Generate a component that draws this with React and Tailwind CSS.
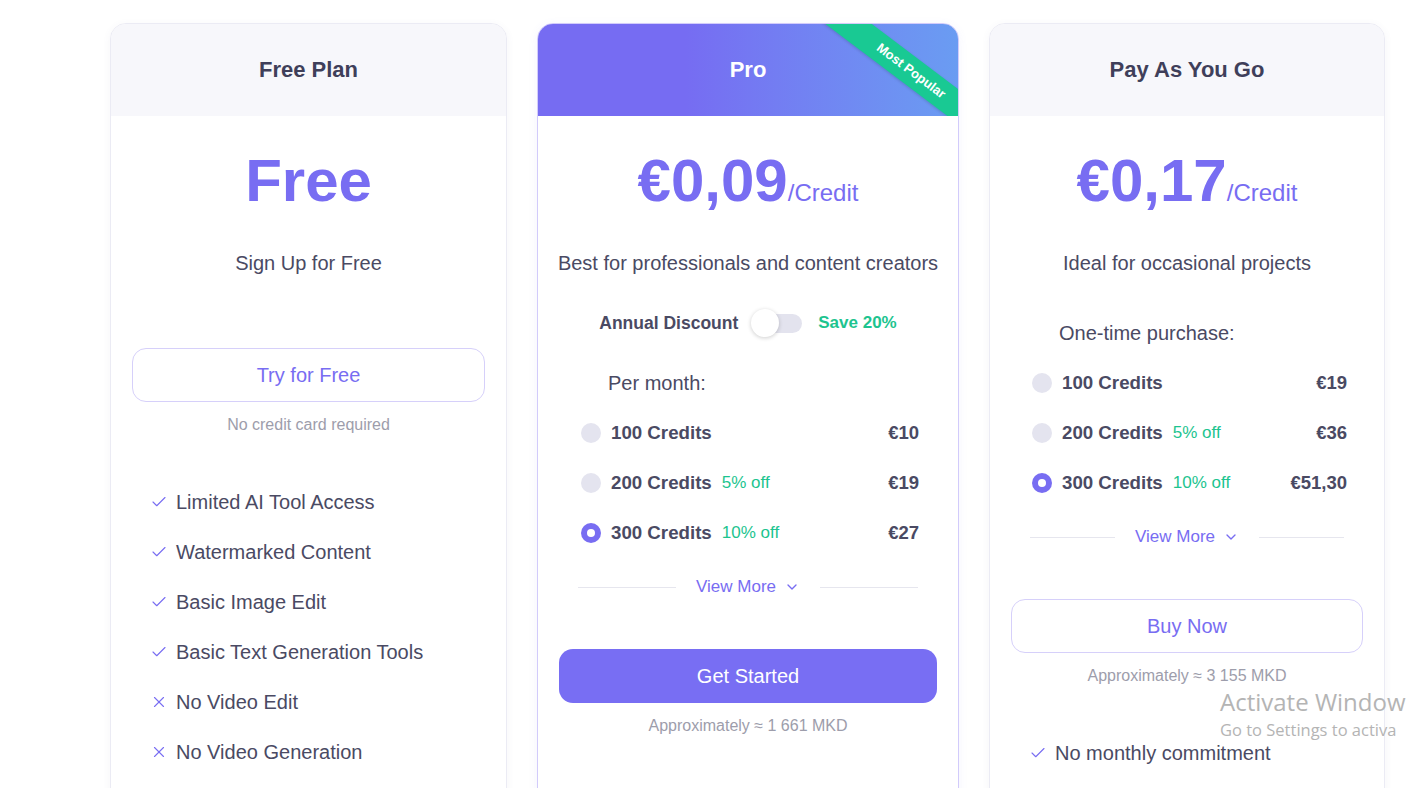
import { ChevronDown, Check, X } from 'lucide-react'

const textDark = 'text-[#4a4a63]'

const Radio = ({ checked }) =>
  checked ? (
    <span className="w-[20px] h-[20px] rounded-full bg-[#786df2] flex items-center justify-center shrink-0">
      <span className="w-[8px] h-[8px] rounded-full bg-white" />
    </span>
  ) : (
    <span className="w-[20px] h-[20px] rounded-full bg-[#e4e4ef] shrink-0" />
  )

const Option = ({ credits, off, price, checked }) => (
  <div className="h-[50px] flex items-center">
    <Radio checked={checked} />
    <span className={`ml-[10px] text-[18.7px] font-bold ${textDark}`}>{credits}</span>
    {off && <span className="ml-[10px] text-[17px] text-[#1dc48f]">{off}</span>}
    <span className={`ml-auto text-[18.5px] font-bold ${textDark}`}>{price}</span>
  </div>
)

const ViewMore = () => (
  <div className="flex items-center h-[24px] px-[19px]">
    <div className="flex-1 h-px bg-[#e6e6ee]" />
    <div className="mx-[20px] flex items-center gap-[8px] text-[17px] text-[#786df2]">
      View More
      <ChevronDown size={16} strokeWidth={2} />
    </div>
    <div className="flex-1 h-px bg-[#e6e6ee]" />
  </div>
)

const Feature = ({ label, ok = true }) => (
  <li className="h-[50px] flex items-center pl-[18px]">
    {ok ? (
      <Check size={18} strokeWidth={1.5} className="text-[#786df2] shrink-0" />
    ) : (
      <X size={18} strokeWidth={1.5} className="text-[#786df2] shrink-0" />
    )}
    <span className={`ml-[8px] text-[20px] ${textDark}`}>{label}</span>
  </li>
)

const Price = ({ value, unit }) => (
  <div className="mt-[35px] h-[60px] flex items-end justify-center leading-none">
    <span className="text-[60px] font-bold text-[#786df2] leading-none">{value}</span>
    {unit && <span className="text-[24px] text-[#786df2] mb-[6px]">{unit}</span>}
  </div>
)

const Desc = ({ children }) => (
  <p className={`mt-[38px] -mx-[4px] whitespace-nowrap text-center text-[20px] leading-[28px] ${textDark}`}>{children}</p>
)

const Approx = ({ children }) => (
  <p className="mt-[11px] text-center text-[16px] leading-[24px] text-[#9d9dab]">{children}</p>
)

export default function App() {
  return (
    <div
      className="relative h-[788px] w-[1406px] overflow-hidden bg-white"
      style={{ fontFamily: '"Liberation Sans", Arial, sans-serif' }}
    >
      <div className="flex gap-[30px] pl-[110px] pt-[23px]">
        {/* Free plan */}
        <div className="w-[397px] h-[820px] shrink-0 rounded-2xl border border-[#ebebf4] bg-white shadow-[0_2px_8px_rgba(80,80,140,0.06)] overflow-hidden">
          <div className="h-[92px] bg-[#f7f7fb] flex items-center justify-center">
            <h2 className="text-[22px] font-bold text-[#3f3f5a] -mt-[2px]">Free Plan</h2>
          </div>
          <div className="px-[21px]">
            <Price value="Free" />
            <Desc>Sign Up for Free</Desc>
            <button className="mt-[71px] w-full h-[54px] rounded-[14px] border border-[#d6d0fa] bg-white text-[20px] text-[#786df2]">
              Try for Free
            </button>
            <Approx>No credit card required</Approx>
            <ul className="mt-[40px]">
              <Feature label="Limited AI Tool Access" />
              <Feature label="Watermarked Content" />
              <Feature label="Basic Image Edit" />
              <Feature label="Basic Text Generation Tools" />
              <Feature label="No Video Edit" ok={false} />
              <Feature label="No Video Generation" ok={false} />
            </ul>
          </div>
        </div>

        {/* Pro */}
        <div className="w-[422px] h-[820px] shrink-0 rounded-2xl border border-[#d2cbfb] bg-white shadow-[0_2px_10px_rgba(120,109,242,0.08)] overflow-hidden">
          <div className="relative h-[92px] bg-gradient-to-r from-[#766cf2] from-35% to-[#6a9cf2] flex items-center justify-center overflow-hidden">
            <h2 className="text-[22px] font-bold text-white -mt-[2px]">Pro</h2>
            <div className="absolute left-[268px] top-[33px] w-[210px] h-[28px] rotate-[37deg] bg-[#19c993] shadow-[0_1px_3px_rgba(0,0,0,0.15)] flex items-center justify-center text-[13px] font-bold text-white">
              Most Popular
            </div>
          </div>
          <div className="px-[21px]">
            <Price value="€0,09" unit="/Credit" />
            <Desc>Best for professionals and content creators</Desc>
            <div className="mt-[32px] h-[28px] flex items-center justify-center">
              <span className={`text-[17.5px] font-bold ${textDark}`}>Annual Discount</span>
              <span className="relative ml-[14px] w-[50px] h-[19px] rounded-full bg-[#e3e3ee]">
                <span className="absolute -left-[1px] -top-[5px] w-[28px] h-[28px] rounded-full bg-white shadow-[0_1px_4px_rgba(0,0,0,0.2)]" />
              </span>
              <span className="ml-[16px] text-[17px] font-bold text-[#1dc48f]">Save 20%</span>
            </div>
            <p className={`mt-[32px] pl-[49px] text-[20px] leading-[28px] ${textDark}`}>Per month:</p>
            <div className="mt-[11px] pl-[22px] pr-[18px]">
              <Option credits="100 Credits" price="€10" />
              <Option credits="200 Credits" off="5% off" price="€19" />
              <Option credits="300 Credits" off="10% off" price="€27" checked />
            </div>
            <div className="mt-[17px]">
              <ViewMore />
            </div>
            <button className="mt-[50px] w-full h-[54px] rounded-[14px] bg-[#786ef3] text-[20px] text-white">
              Get Started
            </button>
            <Approx>Approximately ≈ 1 661 MKD</Approx>
          </div>
        </div>

        {/* Pay as you go */}
        <div className="w-[396px] h-[820px] shrink-0 rounded-2xl border border-[#ebebf4] bg-white shadow-[0_2px_8px_rgba(80,80,140,0.06)] overflow-hidden">
          <div className="h-[92px] bg-[#f7f7fb] flex items-center justify-center">
            <h2 className="text-[22px] font-bold text-[#3f3f5a] -mt-[2px]">Pay As You Go</h2>
          </div>
          <div className="px-[21px]">
            <Price value="€0,17" unit="/Credit" />
            <Desc>Ideal for occasional projects</Desc>
            <p className={`mt-[42px] pl-[48px] text-[20px] leading-[28px] ${textDark}`}>One-time purchase:</p>
            <div className="mt-[11px] pl-[21px] pr-[16px]">
              <Option credits="100 Credits" price="€19" />
              <Option credits="200 Credits" off="5% off" price="€36" />
              <Option credits="300 Credits" off="10% off" price="€51,30" checked />
            </div>
            <div className="mt-[17px]">
              <ViewMore />
            </div>
            <button className="mt-[50px] w-full h-[54px] rounded-[14px] border border-[#d6d0fa] bg-white text-[20px] text-[#786df2]">
              Buy Now
            </button>
            <Approx>Approximately ≈ 3 155 MKD</Approx>
            <ul className="mt-[40px]">
              <Feature label="No monthly commitment" />
            </ul>
          </div>
        </div>
      </div>

      {/* OS watermark */}
      <div
        className="absolute left-[1220px] top-[686px] whitespace-nowrap text-[#b4b4b4] pointer-events-none"
        style={{ fontFamily: '"Open Sans", "Noto Sans", sans-serif' }}
      >
        <div className="text-[24px] leading-[31px]">Activate Window</div>
        <div className="text-[16.5px] leading-[26px]">Go to Settings to activa</div>
      </div>
    </div>
  )
}
